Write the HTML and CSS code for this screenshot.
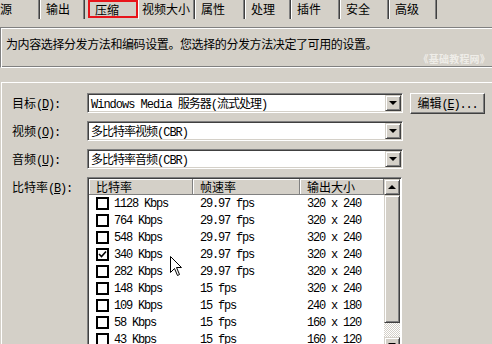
FILE: index.html
```html
<!DOCTYPE html>
<html lang="zh-CN">
<head>
    <meta charset="UTF-8">
    <meta name="viewport" content="width=device-width, initial-scale=1.0">
    <title>压缩设置</title>
    <link rel="stylesheet" href="styles.css">
</head>
<body>
    <div class="tabs">
        <div class="tab tab-first">源</div>
        <div class="tab tab-w45">输出</div>
        <div class="tab tab-selected">压缩</div>
        <div class="tab tab-w57">视频大小</div>
        <div class="tab tab-w50">属性</div>
        <div class="tab tab-w46">处理</div>
        <div class="tab tab-w49">插件</div>
        <div class="tab tab-w49">安全</div>
        <div class="tab tab-w48">高级</div>
    </div>

    <div class="desc">
        <p class="desc-text">为内容选择分发方法和编码设置。您选择的分发方法决定了可用的设置。</p>
        <span class="watermark">《基础教程网》</span>
    </div>

    <div class="panel">
        <div class="form-row">
            <label class="field-label">目标<span class="key">(<u>D</u>):</span></label>
            <div class="combo">
                <span class="combo-text">Windows Media 服务器(流式处理)</span>
                <span class="drop-btn"><span class="arrow-down"></span></span>
            </div>
            <button class="btn">编辑<span class="key">(<u>E</u>)...</span></button>
        </div>
        <div class="form-row">
            <label class="field-label">视频<span class="key">(<u>O</u>):</span></label>
            <div class="combo">
                <span class="combo-text">多比特率视频(CBR)</span>
                <span class="drop-btn"><span class="arrow-down"></span></span>
            </div>
        </div>
        <div class="form-row">
            <label class="field-label">音频<span class="key">(<u>U</u>):</span></label>
            <div class="combo">
                <span class="combo-text">多比特率音频(CBR)</span>
                <span class="drop-btn"><span class="arrow-down"></span></span>
            </div>
        </div>
        <div class="form-row list-row">
            <label class="field-label list-label">比特率<span class="key">(<u>B</u>):</span></label>
            <div class="list">
                <div class="list-body">
                    <div class="list-head">
                        <div class="head-cell">比特率</div>
                        <div class="head-cell">帧速率</div>
                        <div class="head-cell">输出大小</div>
                    </div>
                    <div class="list-item"><span class="cell"><span class="check"></span>1128 Kbps</span><span class="cell">29.97 fps</span><span class="cell">320 x 240</span></div>
                    <div class="list-item"><span class="cell"><span class="check"></span>764 Kbps</span><span class="cell">29.97 fps</span><span class="cell">320 x 240</span></div>
                    <div class="list-item"><span class="cell"><span class="check"></span>548 Kbps</span><span class="cell">29.97 fps</span><span class="cell">320 x 240</span></div>
                    <div class="list-item"><span class="cell"><span class="check"><svg width="9" height="9" viewBox="0 0 9 9"><path d="M1 4 L3.5 6.5 L8 1.5" fill="none" stroke="#000" stroke-width="1.6"/></svg></span>340 Kbps</span><span class="cell">29.97 fps</span><span class="cell">320 x 240</span></div>
                    <div class="list-item"><span class="cell"><span class="check"></span>282 Kbps</span><span class="cell">29.97 fps</span><span class="cell">320 x 240</span></div>
                    <div class="list-item"><span class="cell"><span class="check"></span>148 Kbps</span><span class="cell">15 fps</span><span class="cell">320 x 240</span></div>
                    <div class="list-item"><span class="cell"><span class="check"></span>109 Kbps</span><span class="cell">15 fps</span><span class="cell">240 x 180</span></div>
                    <div class="list-item"><span class="cell"><span class="check"></span>58 Kbps</span><span class="cell">15 fps</span><span class="cell">160 x 120</span></div>
                    <div class="list-item"><span class="cell"><span class="check"></span>43 Kbps</span><span class="cell">15 fps</span><span class="cell">160 x 120</span></div>
                </div>
                <div class="scrollbar">
                    <span class="sb-btn"><span class="arrow-up"></span></span>
                    <span class="sb-thumb"></span>
                    <span class="sb-track"></span>
                    <span class="sb-btn"><span class="arrow-down"></span></span>
                </div>
            </div>
        </div>
    </div>

    <svg class="cursor" width="13" height="21" viewBox="0 0 13 21">
        <path d="M0.5 0.5 L0.5 16.5 L4.5 12.5 L7.5 19.5 L9.5 18.5 L6.5 11.5 L11.5 11.5 Z" fill="#fff" stroke="#000" stroke-width="1"/>
    </svg>
</body>
</html>
```

FILE: styles.css
```css
body {
    margin: 0;
    width: 492px;
    height: 344px;
    overflow: hidden;
    position: relative;
    background-color: #d4d0c8;
    color: #000;
    font-family: "Noto Sans CJK SC", sans-serif;
    font-size: 12px;
}
.tabs {
    display: flex;
    height: 19px;
    margin-left: -4px;
}
.tab {
    box-sizing: border-box;
    flex-shrink: 0;
    height: 19px;
    padding: 1px 0 0 5px;
    line-height: 16px;
    font-size: 12px;
    border-left: 1px solid #fff;
    border-right: 1px solid #404040;
    box-shadow: inset -1px 0 #808080;
    white-space: nowrap;
}
.tab-first {
    width: 44px;
    padding-left: 4px;
    border-left: none;
}
.tab-w45 { width: 45px; }
.tab-w46 { width: 46px; }
.tab-w48 { width: 48px; }
.tab-w49 { width: 49px; }
.tab-w50 { width: 50px; }
.tab-w57 {
    width: 57px;
    padding-left: 3px;
}
.tab-selected {
    width: 50px;
    margin-left: 3px;
    height: 18px;
    padding-left: 5px;
    line-height: 14px;
    border: 2px solid #e8141a;
    box-shadow: none;
}
.desc {
    position: relative;
    box-sizing: border-box;
    height: 41px;
    margin-top: 8px;
    border-top: 1px solid #808080;
    border-bottom: 1px solid #fff;
    border-left: 1px solid #808080;
    box-shadow: inset 1px 1px #fff, inset 0 -1px #808080;
}
.desc-text {
    margin: 0;
    padding: 9px 0 0 5px;
    line-height: 14px;
    letter-spacing: -0.4px;
    white-space: nowrap;
}
.watermark {
    position: absolute;
    right: 2px;
    top: 23px;
    font-size: 10px;
    font-weight: bold;
    letter-spacing: 0.2px;
    color: #efede8;
}
.panel {
    margin-top: 14px;
    margin-left: 1px;
    padding: 10px 0 0 10px;
    height: 300px;
    border-top: 1px solid #fff;
    border-left: 1px solid #fff;
    display: flex;
    flex-direction: column;
    gap: 8px;
}
.form-row {
    display: flex;
    align-items: center;
    height: 20px;
}
.field-label {
    width: 75px;
    font-size: 12px;
    white-space: nowrap;
}
.key {
    font-family: "Liberation Mono", monospace;
    font-size: 12px;
    letter-spacing: -1.2px;
}
.combo {
    box-sizing: border-box;
    width: 316px;
    height: 20px;
    padding: 1px;
    display: flex;
    align-items: center;
    background-color: #fff;
    border: 1px solid;
    border-color: #808080 #fff #fff #808080;
    box-shadow: inset 1px 1px #404040, inset -1px -1px #d4d0c8;
}
.combo-text {
    padding-left: 2px;
    font-family: "Liberation Mono", "Noto Sans CJK SC", monospace;
    font-size: 12px;
    letter-spacing: -1px;
    white-space: nowrap;
}
.drop-btn, .sb-btn {
    box-sizing: border-box;
    width: 16px;
    height: 16px;
    display: flex;
    align-items: center;
    justify-content: center;
    background-color: #d4d0c8;
    border: 1px solid;
    border-color: #d4d0c8 #404040 #404040 #d4d0c8;
    box-shadow: inset 1px 1px #fff, inset -1px -1px #808080;
}
.drop-btn {
    margin-left: auto;
}
.arrow-down {
    width: 0;
    height: 0;
    border-left: 4px solid transparent;
    border-right: 4px solid transparent;
    border-top: 4px solid #000;
}
.arrow-up {
    width: 0;
    height: 0;
    border-left: 4px solid transparent;
    border-right: 4px solid transparent;
    border-bottom: 4px solid #000;
}
.btn {
    box-sizing: border-box;
    margin-left: 7px;
    width: 75px;
    height: 21px;
    padding: 0;
    font-family: "Noto Sans CJK SC", sans-serif;
    font-size: 12px;
    color: #000;
    background-color: #d4d0c8;
    border: 1px solid;
    border-color: #fff #404040 #404040 #fff;
    box-shadow: inset -1px -1px #808080;
}
.list-row {
    align-items: flex-start;
    height: auto;
}
.list-label {
    padding-top: 1px;
}
.list {
    box-sizing: border-box;
    width: 315px;
    height: 200px;
    padding: 1px;
    display: grid;
    grid-template-columns: 1fr 16px;
    background-color: #fff;
    border: 1px solid;
    border-color: #808080 #fff #fff #808080;
    box-shadow: inset 1px 1px #404040;
}
.list-head, .list-item {
    display: grid;
    grid-template-columns: 104px 107px 1fr;
}
.head-cell {
    box-sizing: border-box;
    height: 16px;
    padding-left: 7px;
    line-height: 15px;
    font-size: 12px;
    background-color: #d4d0c8;
    border-right: 1px solid #808080;
    border-bottom: 1px solid #808080;
    box-shadow: inset 1px 1px #fff;
}
.list-item {
    height: 17px;
    align-items: center;
    font-family: "Liberation Mono", monospace;
    font-size: 12px;
    letter-spacing: -1.2px;
}
.cell {
    display: flex;
    align-items: center;
    padding-left: 7px;
    white-space: nowrap;
}
.check {
    box-sizing: border-box;
    width: 13px;
    height: 13px;
    margin-right: 5px;
    display: flex;
    align-items: center;
    justify-content: center;
    border: 2px solid #000;
    background-color: #fff;
}
.scrollbar {
    display: flex;
    flex-direction: column;
}
.sb-thumb {
    box-sizing: border-box;
    height: 128px;
    background-color: #d4d0c8;
    border: 1px solid;
    border-color: #d4d0c8 #404040 #404040 #d4d0c8;
    box-shadow: inset 1px 1px #fff, inset -1px -1px #808080;
}
.sb-track {
    height: 14px;
    background-color: #fff;
    background-image: repeating-conic-gradient(#d4d0c8 0 25%, #fff 0 50%);
    background-size: 2px 2px;
}
.cursor {
    position: absolute;
    left: 170px;
    top: 256px;
}
```
